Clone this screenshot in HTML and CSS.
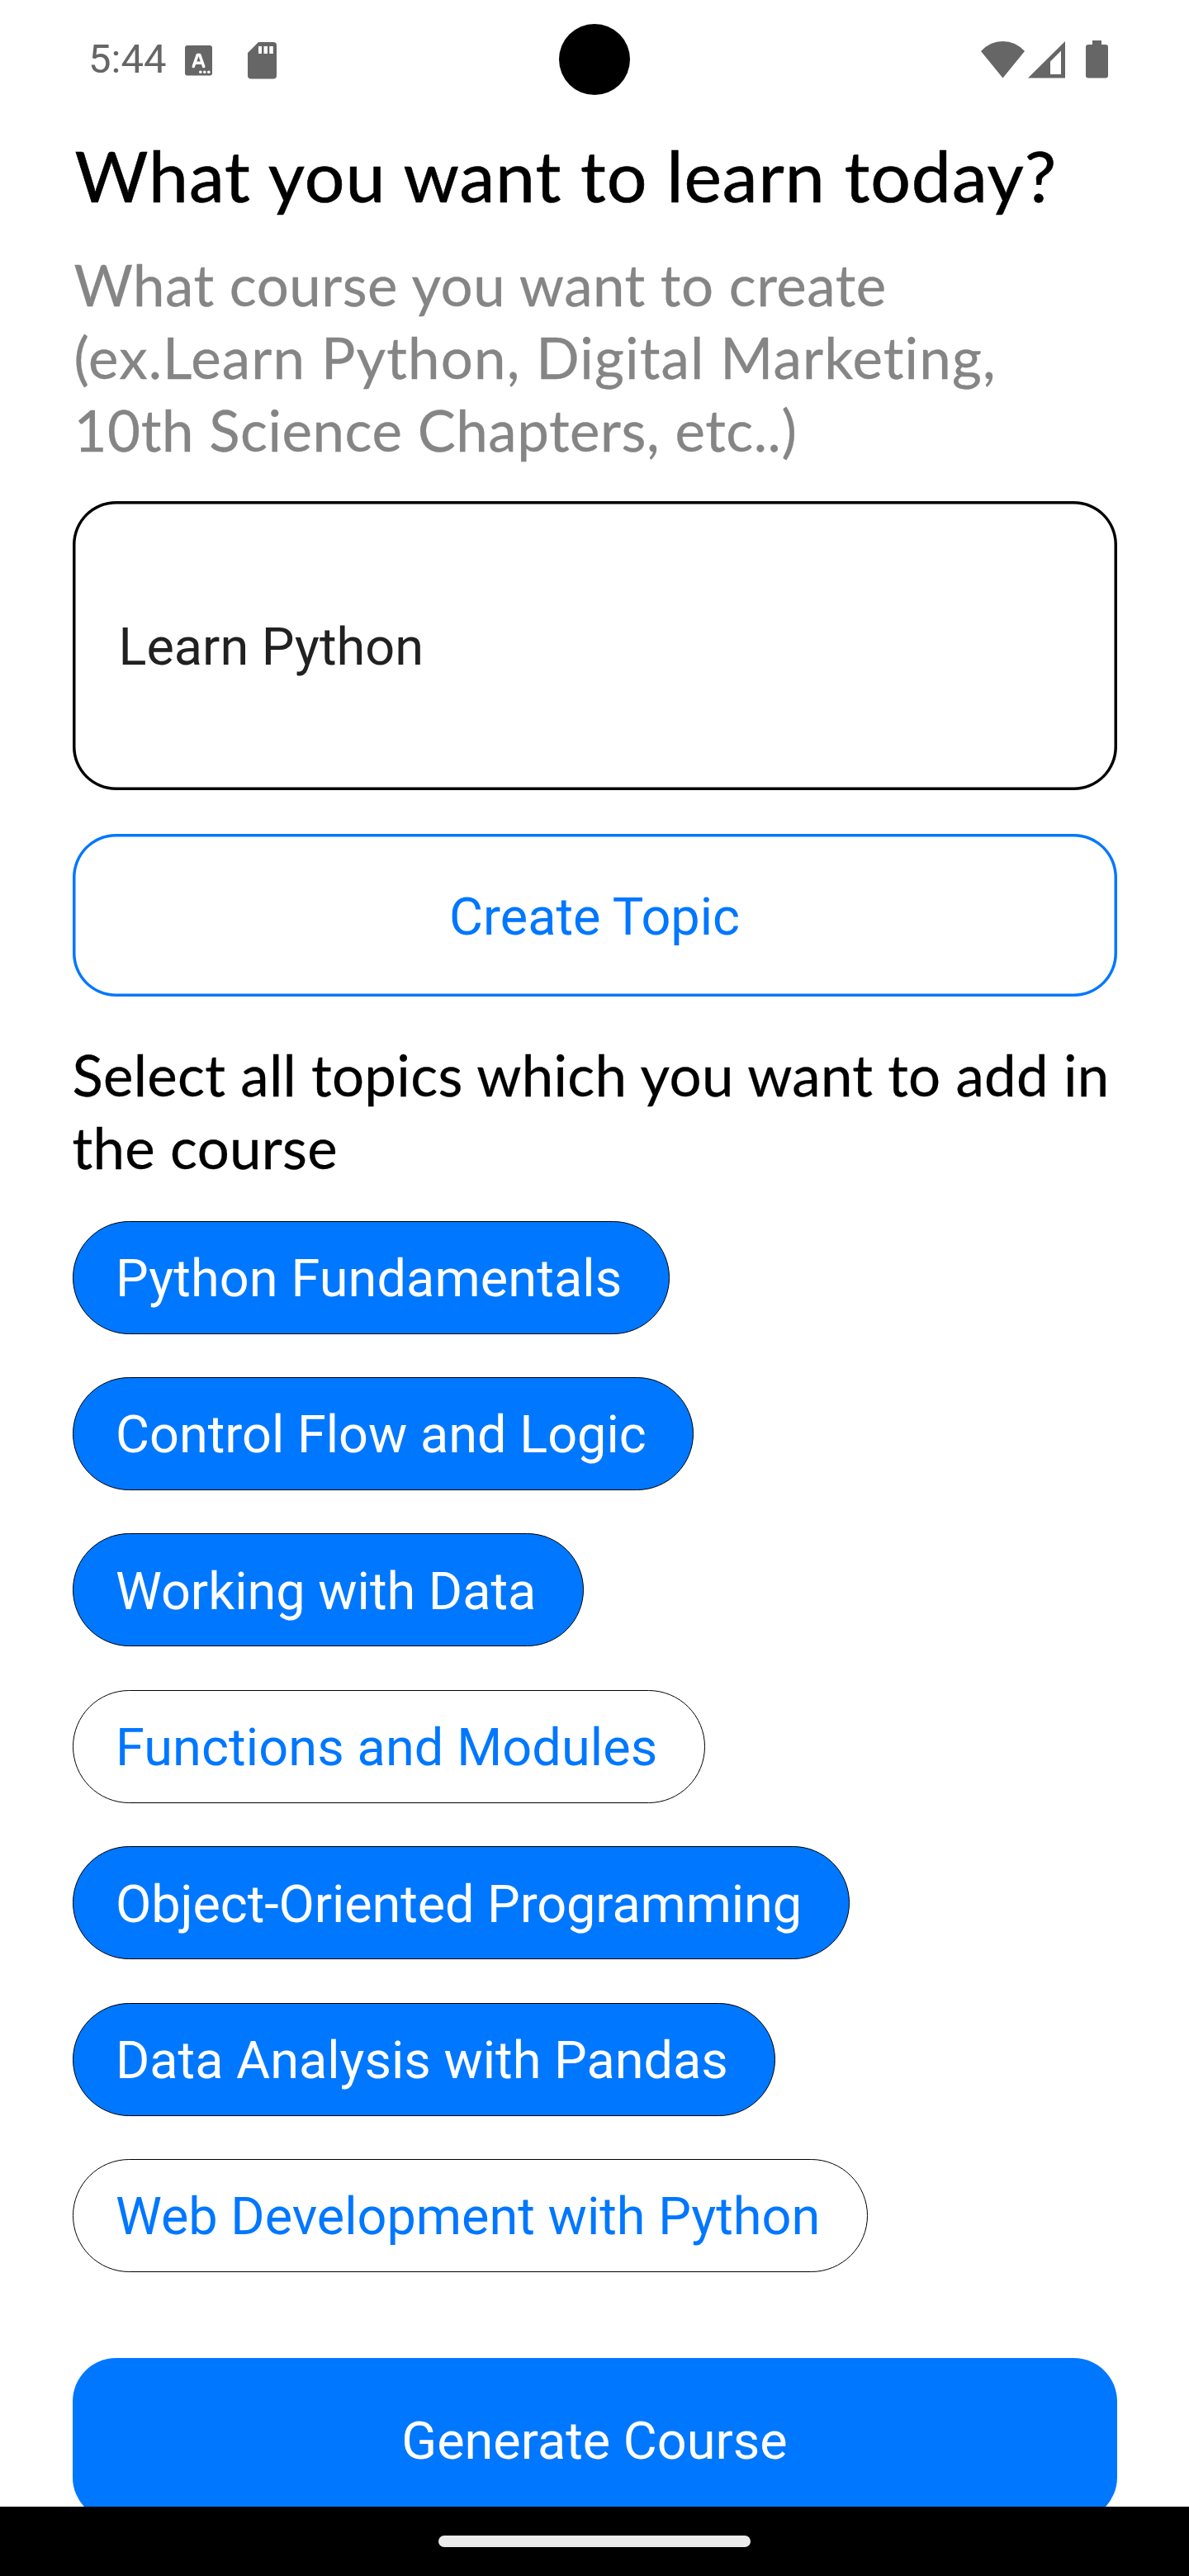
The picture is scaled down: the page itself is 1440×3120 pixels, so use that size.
FILE: index.html
```
<!DOCTYPE html>
<html lang="en">
<head>
<meta charset="utf-8">
<title>Create Course</title>
<link rel="stylesheet" href="styles.css">
</head>
<body>
<div class="screen">
  <header class="status">
    <span class="time">5:44</span>
    <svg class="icon-lang" viewBox="0 0 33 37"><rect width="33" height="36.500" rx="3" fill="#666"/><path d="M10.300 25.500L15.200 11.500h2.600L22.700 25.500M12.500 21.300h8" fill="none" stroke="#fff" stroke-width="3.600" stroke-linecap="round" stroke-linejoin="round"/><g fill="#fff"><circle cx="18.800" cy="32.300" r="1.800"/><circle cx="23.800" cy="32.300" r="1.800"/><circle cx="28.800" cy="32.300" r="1.800"/></g></svg>
    <svg class="icon-sd" viewBox="0 0 35 44.500"><path fill="#666" fill-rule="evenodd" d="M13 0H31a4 4 0 0 1 4 4V40.500a4 4 0 0 1-4 4H4a4 4 0 0 1-4-4V13zM13 5v9h4V5zM19.500 5v9h4.500V5zM26.300 5v9h4.500V5z"/></svg>
    <span class="camera"></span>
    <svg class="icon-wifi" viewBox="0 0 53 44.500"><path fill="#666" d="M0 12Q11 0 26.500 0T53 12L26.500 44.500z"/></svg>
    <svg class="icon-signal" viewBox="0 0 45 44.500"><path fill="#666" fill-rule="evenodd" d="M0 44.500L45 0V44.500zM27 24.500V40H40V11.500z"/></svg>
    <svg class="icon-battery" viewBox="0 0 27 45.500"><path fill="#666" d="M8 0H19V5H24a3 3 0 0 1 3 3V42.500a3 3 0 0 1-3 3H3a3 3 0 0 1-3-3V8a3 3 0 0 1 3-3H8z"/></svg>
  </header>
  <main class="content">
    <h1 class="title">What you want to learn today?</h1>
    <p class="hint"><span class="line-intro">What course you want to create</span><br><span class="line-examples">(ex.Learn Python, Digital Marketing,</span><br><span class="line-more">10th Science Chapters, etc..)</span></p>
    <div class="field">Learn Python</div>
    <div class="button outline">Create Topic</div>
    <p class="prompt">Select all topics which you want to add in<br>the course</p>
    <div class="topics">
      <div class="chip on loose">Python Fundamentals</div>
      <div class="chip on">Control Flow and Logic</div>
      <div class="chip on">Working with Data</div>
      <div class="chip loose">Functions and Modules</div>
      <div class="chip on tight">Object-Oriented Programming</div>
      <div class="chip on">Data Analysis with Pandas</div>
      <div class="chip">Web Development with Python</div>
    </div>
    <div class="button solid">Generate Course</div>
  </main>
  <footer class="nav"><span class="handle"></span></footer>
</div>
</body>
</html>
```
FILE: styles.css
```
* { box-sizing: border-box; }
body { margin: 0; background: #fff; font-family: Roboto, "Liberation Sans", sans-serif; }
.screen { width: 1440px; height: 3120px; overflow: hidden; display: flex; flex-direction: column; }

.status { height: 145px; flex: none; display: flex; align-items: flex-start; padding-left: 107px; color: #666; }
.status svg { display: block; flex: none; }
.time { width: 117px; font-size: 49px; line-height: 58px; margin-top: 43px; }
.icon-lang { width: 33px; height: 37px; margin-top: 55px; }
.icon-sd { width: 35px; height: 44.5px; margin: 51px 0 0 43px; }
.camera { width: 86px; height: 86px; border-radius: 50%; background: #000; margin: 29px 0 0 342px; }
.icon-wifi { width: 53px; height: 44.5px; margin: 50px 0 0 425px; }
.icon-signal { width: 45px; height: 44.5px; margin: 50px 0 0 4px; }
.icon-battery { width: 27px; height: 45.5px; margin: 49px 0 0 25px; }

.content { flex: 1; min-height: 0; overflow: hidden; padding: 12px 87.5px 0; display: flex; flex-direction: column; }
.title, .hint, .prompt { font-family: Lato, "Open Sans", sans-serif; font-weight: 400; margin: 0; white-space: nowrap; flex: none; font-variant-ligatures: none; }
.title { font-size: 86px; line-height: 110px; letter-spacing: 0.93px; padding-left: 3px; -webkit-text-stroke: 0.6px #000; }
.hint { font-size: 69px; line-height: 88.2px; color: #858585; margin-top: 34px; padding-left: 2px; -webkit-text-stroke: 0.3px #858585; }
.line-intro { letter-spacing: 0.5px; }
.line-examples { letter-spacing: 1.15px; }
.line-more { letter-spacing: 0.55px; }
.prompt { font-size: 69px; line-height: 88.2px; letter-spacing: 0.3px; margin-top: 51.5px; -webkit-text-stroke: 0.3px #000; }

.field { flex: none; height: 349.5px; margin-top: 41.4px; border-radius: 52.5px; box-shadow: inset 0 0 0 3.5px #000; padding: 5px 56px 0; display: flex; align-items: center; font-size: 63px; line-height: 74px; color: #212121; }
.button { flex: none; height: 196.7px; border-radius: 52.5px; padding-top: 6px; display: flex; align-items: center; justify-content: center; font-size: 63px; line-height: 74px; }
.outline { margin-top: 53.5px; color: #07f; box-shadow: inset 0 0 0 3.5px #07f; }
.solid { margin-top: 104px; background: #07f; color: #fff; }

.topics { flex: none; margin-top: 44px; display: flex; flex-direction: column; align-items: flex-start; gap: 52.4px; }
.chip { height: 137px; border: 1px solid #000; border-radius: 69px; padding: 4px 56.5px 0 51.5px; display: flex; align-items: center; font-size: 63px; line-height: 74px; color: #07f; white-space: nowrap; }
.on { background: #07f; color: #fff; }
.loose { letter-spacing: 0.11px; }
.tight { letter-spacing: -0.1px; }

.nav { height: 84px; flex: none; background: #000; display: flex; justify-content: center; align-items: flex-start; }
.handle { width: 378px; height: 14px; border-radius: 7px; background: #ebebeb; margin-top: 35px; }
```
